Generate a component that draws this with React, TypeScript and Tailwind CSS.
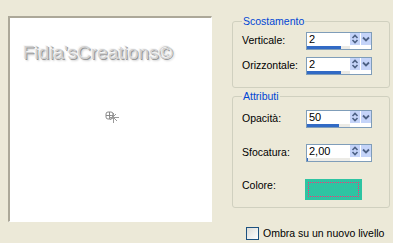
import React from 'react'

const font = { fontFamily: '"Liberation Sans", Arial, sans-serif' }

function SpinArrows() {
  return (
    <svg width="10" height="12" viewBox="0 0 10 12">
      <path d="M2.5 5 L5 2.5 L7.5 5" fill="none" stroke="#4d6185" strokeWidth="1.6" />
      <path d="M2.5 7 L5 9.5 L7.5 7" fill="none" stroke="#4d6185" strokeWidth="1.6" />
    </svg>
  )
}

function DropArrow() {
  return (
    <svg width="10" height="12" viewBox="0 0 10 12">
      <path d="M2 4.5 L5 7.5 L8 4.5" fill="none" stroke="#4d6185" strokeWidth="1.8" />
    </svg>
  )
}

function SpinInput({ value, pct }: { value: string; pct: string }) {
  return (
    <div className="w-[66px] h-[18px] border border-[#7f9db9] bg-white flex flex-col">
      <div className="flex h-[12px]">
        <div className="flex-1 text-[11px] leading-[13px] pl-[2px] text-black">{value}</div>
        <div className="w-[10px] h-[12px] bg-[#c5d4f9] flex items-center justify-center">
          <SpinArrows />
        </div>
        <div className="w-[10px] h-[12px] ml-[1px] bg-[#c5d4f9] flex items-center justify-center">
          <DropArrow />
        </div>
      </div>
      <div className="mt-[1px] h-[3px] mr-[21px] bg-[#ecebe6]">
        <div className="h-full bg-[#316ac5]" style={{ width: pct }} />
      </div>
    </div>
  )
}

function Row({ label, children, className = '' }: { label: string; children: React.ReactNode; className?: string }) {
  return (
    <div className={`flex items-center ${className}`}>
      <div className="w-[73px] pl-[9px] text-[10.5px] text-black">{label}</div>
      {children}
    </div>
  )
}

function Group({ title, children, className = '' }: { title: string; children: React.ReactNode; className?: string }) {
  return (
    <fieldset className={`border border-[#d0d0bf] rounded-[3px] ${className}`}>
      <legend className="ml-[9px] px-[1px] text-[10.5px] leading-[12px] text-[#0046d5]">{title}</legend>
      {children}
    </fieldset>
  )
}

export default function App() {
  return (
    <div className="w-[393px] h-[243px] bg-[#ece9d8] flex overflow-hidden" style={font}>
      <div className="ml-[8px] mt-[16px] w-[204px] h-[206px] bg-white border-t-2 border-l-2 border-t-[#aca899] border-l-[#aca899] border-r border-b border-r-white border-b-white flex flex-col">
        <div
          className="pl-[13px] pt-[25px] text-[19px] leading-[19px] text-[#d2d2d2]"
          style={{ textShadow: '-1px -1px 0 #f6f6f6, 1px 1px 0 #999999, 2px 2px 2px #cfcfcf' }}
        >
          Fidia'sCreations©
        </div>
        <div className="ml-[94px] mt-[48px]">
          <svg width="16" height="14" viewBox="0 0 16 14">
            <rect x="2" y="2" width="7" height="7" rx="2" fill="none" stroke="#8a8a8a" strokeWidth="1" />
            <path d="M2 5.5 H9 M5.5 2 V9" stroke="#8a8a8a" strokeWidth="1" />
            <path d="M7 5 L13 11 M12 4 L6 10 M9.5 3 V13 M5 7.5 H15" stroke="#9a9a9a" strokeWidth="1" />
          </svg>
        </div>
      </div>

      <div className="ml-[20px] w-[158px] flex flex-col">
        <Group title="Scostamento" className="mt-[15px] pb-[12px]">
          <Row label="Verticale:" className="mt-[5px]">
            <SpinInput value="2" pct="78%" />
          </Row>
          <Row label="Orizzontale:" className="mt-[7px]">
            <SpinInput value="2" pct="78%" />
          </Row>
        </Group>

        <Group title="Attributi" className="mt-[2px] pb-[7px]">
          <Row label="Opacità:" className="mt-[8px]">
            <SpinInput value="50" pct="75%" />
          </Row>
          <Row label="Sfocatura:" className="mt-[16px]">
            <SpinInput value="2,00" pct="3%" />
          </Row>
          <div className="flex items-start mt-[17px]">
            <div className="w-[72px] pl-[9px] text-[10.5px] leading-[12px] text-black">Colore:</div>
            <div className="w-[57px] h-[21px] bg-[#2ec4a2] p-[3px]">
              <div className="w-full h-full border border-dotted border-[#ff2f7a]" />
            </div>
          </div>
        </Group>

        <div className="flex items-center mt-[18px] pl-[14px]">
          <div className="w-[13px] h-[13px] border border-[#1c5180] bg-gradient-to-br from-[#dcdcd7] to-white" />
          <span className="ml-[4px] text-[10.5px] text-black">Ombra su un nuovo livello</span>
        </div>
      </div>
    </div>
  )
}
